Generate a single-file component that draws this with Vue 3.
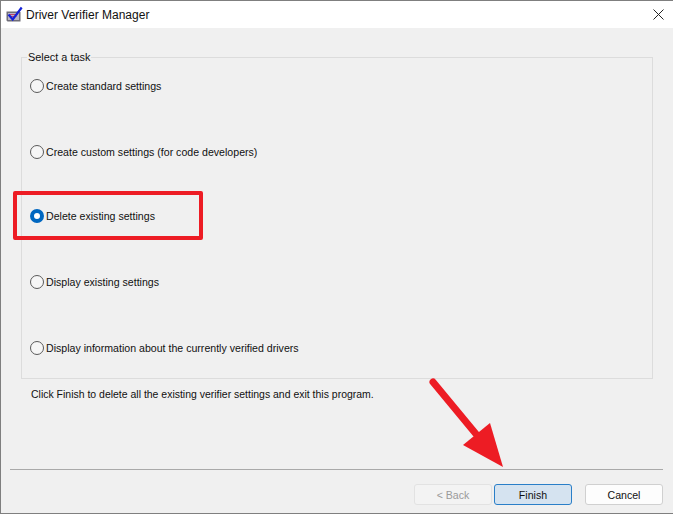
<template>
  <div class="window">
    <header class="titlebar">
      <svg class="app-icon" width="18" height="18" viewBox="0 0 18 18" aria-hidden="true">
        <path d="M.5 5.500h13l1 1v9H1.500l-1-1z" fill="#6f6d78" />
        <path d="M2 7h11v7H2z" fill="#b9b4c6" />
        <path d="M3.500 8.500h8M3.500 10.500h7" stroke="#c04468" stroke-width="1" />
        <path d="M2.500 8.500l4.200 5L15.700 1.500" fill="none" stroke="#1420d8" stroke-width="2.200" />
      </svg>
      <span class="title">Driver Verifier Manager</span>
      <svg class="close" width="11" height="11" viewBox="0 0 11 11" aria-hidden="true">
        <path d="M.5.500l10 10M10.500.500l-10 10" stroke="#222" stroke-width="1" />
      </svg>
    </header>

    <main class="body">
      <fieldset class="group">
        <legend>Select a task</legend>
        <label v-for="task in tasks" :key="task" class="option">
          <span class="radio" :class="{ checked: task === selected }"></span>
          {{ task }}
        </label>
      </fieldset>

      <p class="hint">Click Finish to delete all the existing verifier settings and exit this program.</p>

      <div class="footer">
        <hr class="rule" />
        <div class="buttons">
          <button type="button" class="btn" disabled>&lt; Back</button>
          <button type="button" class="btn primary">Finish</button>
          <button type="button" class="btn cancel">Cancel</button>
        </div>
      </div>
    </main>

    <div class="highlight"></div>
    <svg class="arrow" width="90" height="100" viewBox="0 0 90 100" aria-hidden="true">
      <path d="M4 8L47 60" stroke="#ed1c24" stroke-width="7" stroke-linecap="round" fill="none" />
      <path d="M61 49L74 93L34 71z" fill="#ed1c24" />
    </svg>
  </div>
</template>

<script setup>
const tasks = [
  'Create standard settings',
  'Create custom settings (for code developers)',
  'Delete existing settings',
  'Display existing settings',
  'Display information about the currently verified drivers',
]
const selected = 'Delete existing settings'
</script>

<style>
html,
body {
  margin: 0;
  background: #f0f0f0;
}
</style>

<style scoped>
.window {
  position: relative;
  box-sizing: border-box;
  display: flex;
  flex-direction: column;
  width: 673px;
  height: 514px;
  overflow: hidden;
  border: 1px solid #7f7f7f;
  border-right: 0;
  background: #f0f0f0;
  color: #111;
  font-family: "Liberation Sans", Arial, sans-serif;
  font-size: 10.600px;
}

.titlebar {
  display: flex;
  flex: none;
  align-items: center;
  gap: 2px;
  height: 27px;
  padding: 0 9px 0 5px;
  background: #fff;
}

.title {
  flex: 1;
  font-size: 12px;
}

.body {
  display: flex;
  flex: 1;
  flex-direction: column;
  min-height: 0;
}

.group {
  box-sizing: border-box;
  display: flex;
  flex-direction: column;
  gap: 53px;
  height: 328px;
  margin: 23px 20px 0;
  padding: 16px 0 0 8px;
  border: 1px solid #dcdcdc;
}

legend {
  margin-left: -3px;
  padding: 0 1px;
  font-size: 10.900px;
}

.option {
  display: flex;
  align-items: center;
  gap: 2px;
  height: 13px;
}

.option:nth-of-type(3) {
  margin-top: -2px;
}

.radio {
  box-sizing: border-box;
  flex: none;
  width: 14px;
  height: 14px;
  border: 1px solid #5a5a5a;
  border-radius: 50%;
  background: #f6f6f6;
}

.radio.checked {
  border: 4px solid #0067c0;
  background: #fff;
}

.hint {
  margin: 10px 0 0 30px;
  font-size: 10.470px;
}

.footer {
  margin-top: auto;
  padding: 0 10px 8px 9px;
}

.rule {
  height: 1px;
  margin: 0 0 14px;
  border: 0;
  background: #a9a9a9;
}

.buttons {
  display: flex;
  justify-content: flex-end;
  gap: 2px;
}

.btn {
  box-sizing: border-box;
  width: 78px;
  height: 21px;
  padding: 0;
  border: 1px solid #d0d0d0;
  border-radius: 3px;
  background: #fdfdfd;
  color: #111;
  font: inherit;
}

.btn:disabled {
  border-color: #e2e2e2;
  background: #f3f3f3;
  color: #9a9a9a;
}

.btn.primary {
  border-color: #2a7fc8;
  background: #d5e3f0;
}

.btn.cancel {
  margin-left: 11px;
}

.highlight {
  position: absolute;
  top: 190px;
  left: 12px;
  box-sizing: border-box;
  width: 190px;
  height: 49px;
  border: 4px solid #ed1c24;
  border-radius: 2px;
}

.arrow {
  position: absolute;
  top: 373px;
  left: 428px;
}
</style>
